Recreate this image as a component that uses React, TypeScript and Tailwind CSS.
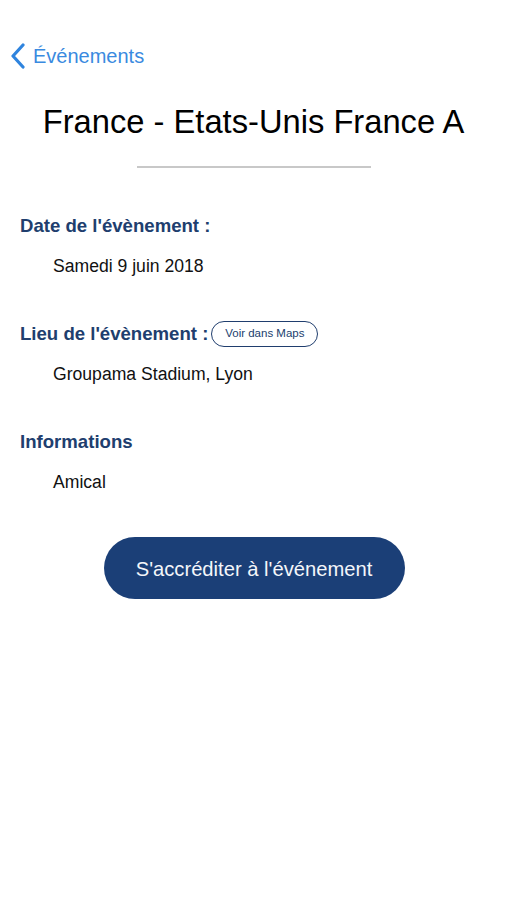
const FONT = { fontFamily: '"Liberation Sans", Arial, sans-serif' };

function Chevron() {
  return (
    <svg width="16" height="26" viewBox="0 0 16 26" fill="none" aria-hidden="true">
      <path d="M13 2 L3 13 L13 24" stroke="#2f84de" strokeWidth="3.2" strokeLinecap="round" strokeLinejoin="round" />
    </svg>
  );
}

function Section({
  title,
  value,
  extra,
}: {
  title: string;
  value: string;
  extra?: React.ReactNode;
}) {
  return (
    <div className="flex flex-col">
      <div className="flex h-[30px] items-center gap-[3px]">
        <span className="text-[18.6px] font-bold text-[#203e6e]">{title}</span>
        {extra}
      </div>
      <div className="mt-[10px] flex h-[30px] items-center pl-[33px] text-[17.6px] text-[#111]">
        {value}
      </div>
    </div>
  );
}

export default function App() {
  return (
    <div className="min-h-[900px] w-full bg-white" style={FONT}>
      {/* Barre de navigation */}
      <div className="mt-[41px] flex h-[30px] items-center pl-[10px]">
        <Chevron />
        <span className="ml-[7px] text-[20px] text-[#3a8ae0]">Événements</span>
      </div>

      {/* Titre */}
      <h1 className="mt-[31px] flex h-[40px] items-center justify-center text-[32.7px] text-black">
        France - Etats-Unis France A
      </h1>
      <div className="mx-auto mt-[24px] h-[2px] w-[234px] bg-[#c8c8c8]" />

      <div className="mt-[43px] flex flex-col gap-[38px] pl-[20px]">
        <Section title="Date de l'évènement :" value="Samedi 9 juin 2018" />
        <Section
          title="Lieu de l'évènement :"
          value="Groupama Stadium, Lyon"
          extra={
            <span className="flex h-[26px] w-[107px] items-center justify-center rounded-full border-[1.5px] border-[#203e6e] text-[11.5px] text-[#203e6e]">
              Voir dans Maps
            </span>
          }
        />
        <Section title="Informations" value="Amical" />
      </div>

      <div className="mt-[40px] flex justify-center">
        <button
          type="button"
          className="ml-[1px] flex h-[62px] w-[301px] items-center justify-center rounded-full bg-[#1b3f77] pt-[3px] text-[20.2px] text-[#f4f6fa]"
        >
          S'accréditer à l'événement
        </button>
      </div>
    </div>
  );
}
